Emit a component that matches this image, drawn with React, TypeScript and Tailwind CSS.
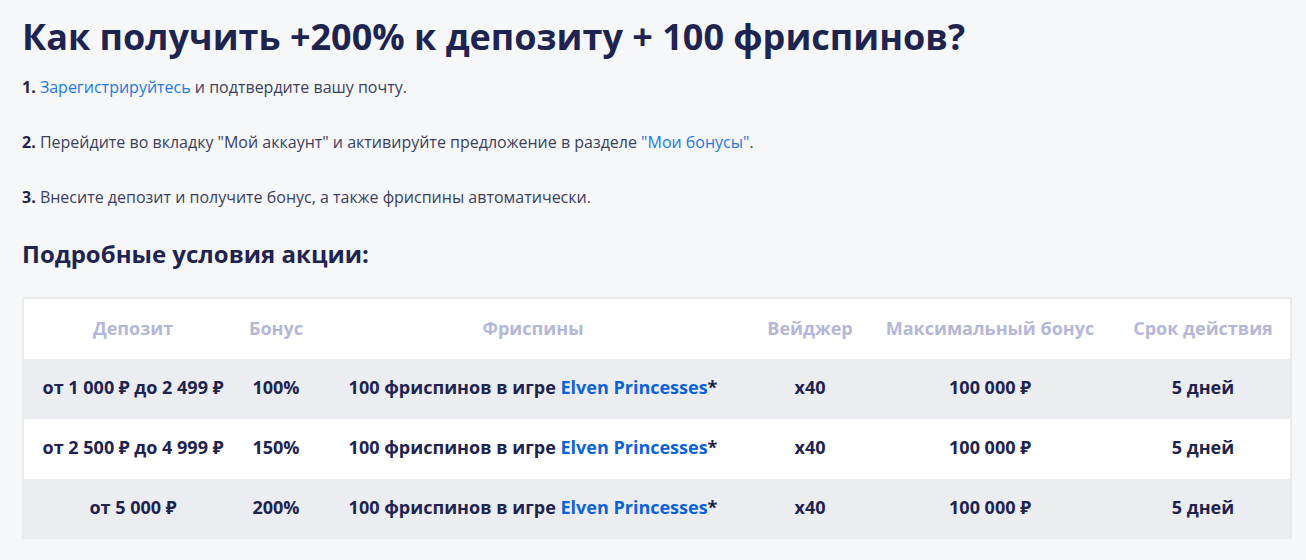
import React from 'react';

const ROWS = [
  { deposit: 'от 1 000 ₽ до 2 499 ₽', bonus: '100%', wager: 'x40', max: '100 000 ₽', term: '5 дней' },
  { deposit: 'от 2 500 ₽ до 4 999 ₽', bonus: '150%', wager: 'x40', max: '100 000 ₽', term: '5 дней' },
  { deposit: 'от 5 000 ₽', bonus: '200%', wager: 'x40', max: '100 000 ₽', term: '5 дней' },
];

const HEADERS = ['Депозит', 'Бонус', 'Фриспины', 'Вейджер', 'Максимальный бонус', 'Срок действия'];

const cols = 'grid grid-cols-[218px_68px_446px_108px_252px_174px]';

const App: React.FC = () => {
  return (
    <div
      className="w-[1306px] h-[560px] bg-[#f6f7f9] px-[22px] pt-[10px] overflow-hidden"
      style={{ fontFamily: '"Open Sans", "Noto Sans", sans-serif' }}
    >
      <h1 className="text-[36px] leading-[54px] font-bold text-[#1e2350]">
        Как получить +200% к депозиту + 100 фриспинов?
      </h1>

      <div className="mt-[11px] flex flex-col gap-[31px] text-[16px] leading-[24px] text-[#3c3f5e]">
        <p>
          <b className="text-[#1e2350]">1.</b>{' '}
          <span className="text-[#1f7ae0]">Зарегистрируйтесь</span> и подтвердите вашу почту.
        </p>
        <p>
          <b className="text-[#1e2350]">2.</b> Перейдите во вкладку "Мой аккаунт" и активируйте предложение в разделе{' '}
          <span className="text-[#1f7ae0]">"Мои бонусы"</span>.
        </p>
        <p>
          <b className="text-[#1e2350]">3.</b> Внесите депозит и получите бонус, а также фриспины автоматически.
        </p>
      </div>

      <h2 className="mt-[29px] text-[24px] leading-[32px] font-bold text-[#1e2350]">Подробные условия акции:</h2>

      <div className="mt-[27px] w-[1270px] border-2 border-[#e9eaee] border-b-0">
        <div className={`${cols} h-[60px] pb-[2px] bg-white items-center text-center text-[18px] font-bold text-[#b4b7d7]`}>
          {HEADERS.map((h) => (
            <div key={h}>{h}</div>
          ))}
        </div>
        {ROWS.map((r, i) => (
          <div
            key={i}
            className={`${cols} h-[60px] pb-[3px] items-center text-center text-[18px] font-bold text-[#1e2350] ${
              i % 2 === 0 ? 'bg-[#ecedf1]' : 'bg-white'
            }`}
          >
            <div>{r.deposit}</div>
            <div>{r.bonus}</div>
            <div>
              100 фриспинов в игре <span className="text-[#0b63d8]">Elven Princesses</span>*
            </div>
            <div>{r.wager}</div>
            <div>{r.max}</div>
            <div>{r.term}</div>
          </div>
        ))}
      </div>
    </div>
  );
};

export default App;
